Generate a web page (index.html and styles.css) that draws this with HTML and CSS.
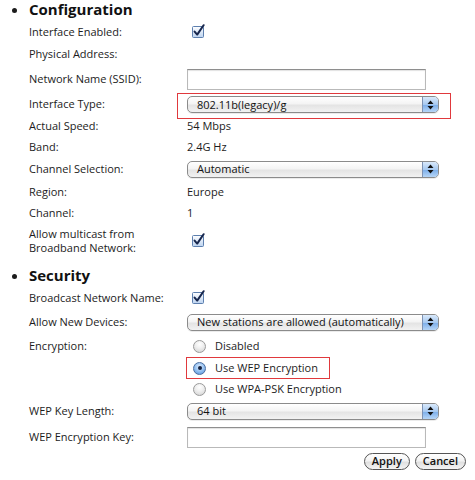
FILE: index.html
```html
<!DOCTYPE html>
<html>
<head>
<meta charset="utf-8">
<link rel="stylesheet" href="styles.css">
</head>
<body>
<ul class="sections">
  <li class="section">
    <h2 class="section-title">Configuration</h2>
    <div class="rows">
      <div class="label">Interface Enabled:</div>
      <div class="value"><span class="checkbox"><svg viewBox="0 0 14 14" width="14" height="14"><defs><linearGradient id="cb1" x1="0" y1="0" x2="0" y2="1"><stop offset="0" stop-color="#ffffff"/><stop offset="1" stop-color="#bcd3f0"/></linearGradient></defs><rect x="0.5" y="2.5" width="11" height="11" rx="1" fill="url(#cb1)" stroke="#5d7fae"/><path d="M2.6 7.6 L5.2 10.6 L11.6 1.2" fill="none" stroke="#17264d" stroke-width="2" stroke-linecap="round" stroke-linejoin="round"/></svg></span></div>

      <div class="label">Physical Address:</div>
      <div class="value"></div>

      <div class="label row-field">Network Name (SSID):</div>
      <div class="value row-field"><span class="textbox"></span></div>

      <div class="label">Interface Type:</div>
      <div class="value"><span class="highlight highlight-select"><span class="select"><span class="select-text">802.11b(legacy)/g</span><span class="select-arrows"><svg viewBox="0 0 7 10" width="7" height="10"><path d="M3.5 0.5 L6.5 4 L0.5 4 Z M3.5 9.5 L6.5 6 L0.5 6 Z" fill="#111"/></svg></span></span></span></div>

      <div class="label">Actual Speed:</div>
      <div class="value">54 Mbps</div>

      <div class="label row-compact">Band:</div>
      <div class="value row-compact">2.4G Hz</div>

      <div class="label row-select">Channel Selection:</div>
      <div class="value row-select"><span class="select"><span class="select-text">Automatic</span><span class="select-arrows"><svg viewBox="0 0 7 10" width="7" height="10"><path d="M3.5 0.5 L6.5 4 L0.5 4 Z M3.5 9.5 L6.5 6 L0.5 6 Z" fill="#111"/></svg></span></span></div>

      <div class="label">Region:</div>
      <div class="value">Europe</div>

      <div class="label row-compact">Channel:</div>
      <div class="value row-compact">1</div>

      <div class="label row-double">Allow multicast from<br>Broadband Network:</div>
      <div class="value row-double"><span class="checkbox"><svg viewBox="0 0 14 14" width="14" height="14"><defs><linearGradient id="cb2" x1="0" y1="0" x2="0" y2="1"><stop offset="0" stop-color="#ffffff"/><stop offset="1" stop-color="#bcd3f0"/></linearGradient></defs><rect x="0.5" y="2.5" width="11" height="11" rx="1" fill="url(#cb2)" stroke="#5d7fae"/><path d="M2.6 7.6 L5.2 10.6 L11.6 1.2" fill="none" stroke="#17264d" stroke-width="2" stroke-linecap="round" stroke-linejoin="round"/></svg></span></div>
    </div>
  </li>

  <li class="section section-security">
    <h2 class="section-title">Security</h2>
    <div class="rows">
      <div class="label">Broadcast Network Name:</div>
      <div class="value"><span class="checkbox"><svg viewBox="0 0 14 14" width="14" height="14"><defs><linearGradient id="cb3" x1="0" y1="0" x2="0" y2="1"><stop offset="0" stop-color="#ffffff"/><stop offset="1" stop-color="#bcd3f0"/></linearGradient></defs><rect x="0.5" y="2.5" width="11" height="11" rx="1" fill="url(#cb3)" stroke="#5d7fae"/><path d="M2.6 7.6 L5.2 10.6 L11.6 1.2" fill="none" stroke="#17264d" stroke-width="2" stroke-linecap="round" stroke-linejoin="round"/></svg></span></div>

      <div class="label row-wide">Allow New Devices:</div>
      <div class="value row-wide"><span class="select"><span class="select-text">New stations are allowed (automatically)</span><span class="select-arrows"><svg viewBox="0 0 7 10" width="7" height="10"><path d="M3.5 0.5 L6.5 4 L0.5 4 Z M3.5 9.5 L6.5 6 L0.5 6 Z" fill="#111"/></svg></span></span></div>

      <div class="label label-top">Encryption:</div>
      <div class="value radio-group">
        <div class="radio-line"><span class="radio"></span><span>Disabled</span></div>
        <div class="radio-line"><span class="highlight highlight-radio"><span class="radio radio-on"></span><span>Use WEP Encryption</span></span></div>
        <div class="radio-line radio-line-last"><span class="radio"></span><span>Use WPA-PSK Encryption</span></div>
      </div>

      <div class="label row-select">WEP Key Length:</div>
      <div class="value row-select"><span class="select"><span class="select-text">64 bit</span><span class="select-arrows"><svg viewBox="0 0 7 10" width="7" height="10"><path d="M3.5 0.5 L6.5 4 L0.5 4 Z M3.5 9.5 L6.5 6 L0.5 6 Z" fill="#111"/></svg></span></span></div>

      <div class="label row-field">WEP Encryption Key:</div>
      <div class="value row-field"><span class="textbox"></span></div>
    </div>
    <div class="actions">
      <button class="btn">Apply</button>
      <button class="btn">Cancel</button>
    </div>
  </li>
</ul>
</body>
</html>
```

FILE: styles.css
```css
html, body {
  margin: 0;
  padding: 0;
  background: #ffffff;
}

body {
  font-family: "Open Sans", "DejaVu Sans", sans-serif;
  font-size: 11px;
  color: #1c1c1c;
}

.sections {
  margin: 0;
  padding: 0 9px 0 29px;
  list-style: disc;
}

.section-security {
  margin-top: 7px;
}

.section-title {
  margin: -1px 0 3px 0;
  font-size: 15px;
  font-weight: 700;
  line-height: 18px;
  color: #111;
}

.section::marker {
  font-size: 15px;
}

.rows {
  display: grid;
  grid-template-columns: 158px 1fr;
}

.label,
.value {
  height: 22px;
  display: flex;
  align-items: center;
  line-height: 14px;
}

.row-field { height: 28px; }
.row-compact { height: 20px; }
.row-select { height: 24px; }
.row-wide { height: 26px; }
.row-double { height: 36px; }

.label-top {
  align-items: flex-start;
  padding-top: 4px;
  height: auto;
}

.checkbox {
  display: inline-flex;
  margin-left: 5px;
  margin-top: -3px;
}

.textbox {
  display: block;
  width: 237px;
  height: 19px;
  border: 1px solid #b9b9b9;
  border-top-color: #8e8e8e;
  box-shadow: inset 0 1px 1px rgba(0,0,0,0.12);
  background: #fff;
}

.select {
  display: flex;
  align-items: center;
  width: 250px;
  height: 15px;
  border: 1px solid #8b8b8b;
  border-radius: 5px;
  background: linear-gradient(#ffffff 0%, #f4f4f4 45%, #e4e4e4 55%, #f2f2f2 100%);
  box-shadow: 0 1px 0 rgba(0,0,0,0.08);
  overflow: hidden;
}

.select-text {
  flex: 1;
  padding-left: 9px;
  white-space: nowrap;
  color: #111;
}

.select-arrows {
  width: 15px;
  align-self: stretch;
  display: flex;
  align-items: center;
  justify-content: center;
  border-left: 1px solid #7d92b3;
  background: linear-gradient(#d9e9fb 0%, #a7c9f0 50%, #7fb0ea 55%, #b6d5f6 100%);
}

.highlight {
  border: 1px solid #e0393d;
}

.highlight-select {
  display: inline-flex;
  margin: -2px -12px -6px -10px;
  padding: 2px 11px 5px 9px;
}

.radio-group {
  height: auto;
  display: flex;
  flex-direction: column;
  align-items: stretch;
}

.radio-line {
  height: 22px;
  display: flex;
  align-items: center;
  gap: 9px;
  padding-left: 6px;
}

.radio-line-last {
  height: 20px;
}

.radio-line .highlight-radio {
  display: inline-flex;
  align-items: center;
  gap: 9px;
  height: 20px;
  margin-left: -7px;
  padding: 0 11px 0 6px;
}

.radio {
  width: 11px;
  height: 11px;
  border-radius: 50%;
  border: 1px solid #9a9a9a;
  background: radial-gradient(circle at 50% 30%, #ffffff 0%, #f0f0f0 40%, #cfcfcf 100%);
  flex: none;
  position: relative;
}

.radio-on {
  border-color: #4a6d9f;
  background: radial-gradient(circle at 50% 35%, #e2efff 0%, #9cc5f2 45%, #4d8fd9 100%);
}

.radio-on::after {
  content: "";
  position: absolute;
  left: 3.5px;
  top: 3.5px;
  width: 4px;
  height: 4px;
  border-radius: 50%;
  background: #15223f;
}

.actions {
  height: 20px;
  display: flex;
  justify-content: flex-end;
  align-items: center;
  gap: 5px;
}

.btn {
  font-family: "Open Sans", "DejaVu Sans", sans-serif;
  font-size: 11px;
  font-weight: 600;
  color: #111;
  height: 17px;
  line-height: 14px;
  padding: 0 7px;
  border: 1px solid #555;
  border-radius: 9px;
  background: linear-gradient(#ffffff 0%, #f3f3f3 45%, #e0e0e0 55%, #f4f4f4 100%);
}
```
